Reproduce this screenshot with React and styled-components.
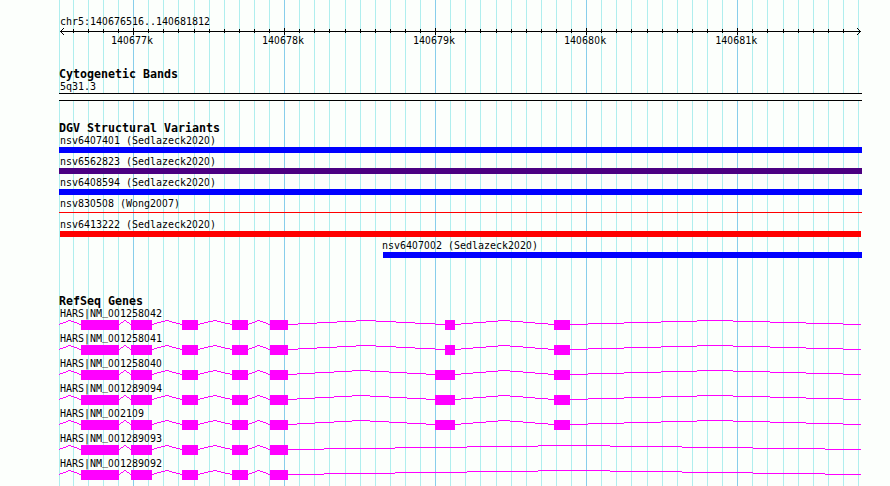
import React from "react";
import styled, { createGlobalStyle } from "styled-components";

const LEFT = 59;
const WIDTH = 803;

const minorLines = [
  59, 73, 88, 103, 118, 148, 163, 178, 194, 209, 224, 239, 254, 269, 299, 314,
  329, 345, 360, 375, 390, 405, 420, 450, 465, 480, 496, 511, 526, 541, 556,
  571, 601, 616, 631, 647, 662, 677, 692, 707, 722, 752, 767, 783, 798, 813,
  828, 843, 858
];
const majorLines = [133, 284, 435, 586, 737];
const tickLabels = ["140677k", "140678k", "140679k", "140680k", "140681k"];

const variants = [
  { name: "nsv6407401 (Sedlazeck2020)", color: "#0000ff" },
  { name: "nsv6562823 (Sedlazeck2020)", color: "#4b0082" },
  { name: "nsv6408594 (Sedlazeck2020)", color: "#0000ff" },
  { name: "nsv830508 (Wong2007)", color: "#ff0000", thin: true },
  { name: "nsv6413222 (Sedlazeck2020)", color: "#ff0000", from: 60, to: 861 },
  { name: "nsv6407002 (Sedlazeck2020)", color: "#0000ff", from: 383, label: 323 }
];

const commonExons = [
  [81, 119],
  [131, 152],
  [182, 198],
  [232, 248],
  [270, 288]
];
const shortExons = [...commonExons, [445, 455], [554, 570]];
const longExons = [...commonExons, [435, 455], [554, 570]];

const genes = [
  { name: "HARS|NM_001258042", exons: shortExons },
  { name: "HARS|NM_001258041", exons: shortExons },
  { name: "HARS|NM_001258040", exons: longExons },
  { name: "HARS|NM_001289094", exons: longExons },
  { name: "HARS|NM_002109", exons: longExons },
  { name: "HARS|NM_001289093", exons: commonExons },
  { name: "HARS|NM_001289092", exons: commonExons }
];

const GlobalStyle = createGlobalStyle`
  body {
    margin: 0;
    background: #fcfffc;
  }
`;

const Browser = styled.div`
  position: relative;
  width: 890px;
  height: 486px;
  overflow: hidden;
  background: #fcfffc;
  color: #000;
  font-family: "DejaVu Sans Mono", "Liberation Mono", monospace;
`;

const Grid = styled.svg`
  position: absolute;
  top: 0;
  left: 0;
  display: block;
`;

const Tracks = styled.div`
  position: relative;
  display: flex;
  flex-direction: column;
  width: ${WIDTH}px;
  padding: 16px 0 0 ${LEFT}px;
`;

const Track = styled.section`
  display: flex;
  flex-direction: column;
  gap: ${props => props.$gap || 0}px;
  margin-bottom: ${props => props.$space || 0}px;
`;

const Title = styled.h2`
  height: 14px;
  margin: 0 0 ${props => -(props.$gap || 0)}px;
  font-size: 11.63px;
  font-weight: bold;
  line-height: 14px;
  white-space: pre;
`;

const Label = styled.div`
  height: 12px;
  padding-left: ${props => props.$indent || 1}px;
  font-size: 10px;
  letter-spacing: -0.02px;
  line-height: 12px;
  white-space: pre;
`;

// the mono face dots its zeros, so they come from the condensed sans
const Zero = styled.span`
  font-family: "DejaVu Sans Condensed", "DejaVu Sans", sans-serif;
  font-stretch: condensed;
  letter-spacing: 0.27px;
  line-height: 1;
`;

// lifted onto the baseline, clear of the exons below
const Underscore = styled.span`
  line-height: 0;
  vertical-align: 2px;
`;

const Ticks = styled.div`
  display: flex;
  gap: 108px;
  padding-left: 51px;
`;

const Drawing = styled.svg`
  display: block;
  shape-rendering: crispEdges;
`;

const Band = styled.div`
  height: 6px;
  border-top: 1px solid #000;
  border-bottom: 1px solid #000;
  background: #fcfffc;
`;

const Bar = styled.div`
  height: ${props => (props.$thin ? 1 : 6)}px;
  margin: ${props => (props.$thin ? "2px 0 3px" : "0")};
  margin-left: ${props => props.$from - LEFT}px;
  width: ${props => props.$to - props.$from}px;
  background: ${props => props.$color};
`;

const Text = ({ children, indent }) => (
  <Label $indent={indent}>
    {children.split(/(0+|_)/).map((part, i) => {
      if (part[0] === "0") return <Zero key={i}>{part}</Zero>;
      if (part === "_") return <Underscore key={i}>{part}</Underscore>;
      return part;
    })}
  </Label>
);

// intron hat, climbs four pixels to the middle and back down
const hat = (from, to) => {
  const part = (to - from) / 16;
  const edges = [from];
  for (let i = 1; i < 16; i += 2) {
    edges.push(Math.round(from + part * i - 0.2));
  }
  edges.push(to);
  return [4, 3, 2, 1, 0, 1, 2, 3, 4]
    .map((y, i) => `M${edges[i]} ${y}H${edges[i + 1]}v1H${edges[i]}z`)
    .join("");
};

const introns = exons => {
  const starts = [LEFT, ...exons.map(e => e[1])];
  const ends = [...exons.map(e => e[0]), 861];
  return starts.map((start, i) => hat(start, ends[i])).join("");
};

const Ruler = () => (
  <Drawing width={WIDTH} height="7" viewBox={`${LEFT} 0 ${WIDTH} 7`}>
    <rect x="60" y="3" width="801" height="1" />
    {minorLines.slice(1, -1).map(x => (
      <rect key={x} x={x} y="1" width="1" height="4" />
    ))}
    {majorLines.map(x => (
      <rect key={x} x={x} y="0" width="1" height="7" />
    ))}
    <path d="M63 0h1v1h-1zM62 1h1v1h-1zM61 2h1v1h-1zM61 4h1v1h-1zM62 5h1v1h-1zM63 6h1v1h-1z" />
    <path d="M857 0h1v1h-1zM858 1h1v1h-1zM859 2h1v1h-1zM859 4h1v1h-1zM858 5h1v1h-1zM857 6h1v1h-1z" />
  </Drawing>
);

const Gene = ({ name, exons }) => (
  <div>
    <Text>{name}</Text>
    <Drawing
      width={WIDTH}
      height="10"
      viewBox={`${LEFT} 0 ${WIDTH} 10`}
      fill="#ff00ff"
    >
      <path d={introns(exons)} />
      {exons.map(([from, to]) => (
        <rect key={from} x={from} y="0" width={to - from} height="10" />
      ))}
    </Drawing>
  </div>
);

const App = () => (
  <Browser>
    <GlobalStyle />
    <Grid width="890" height="486">
      {minorLines.map(x => (
        <rect key={x} x={x} width="1" height="486" fill="#afeeee" />
      ))}
      {majorLines.map(x => (
        <rect key={x} x={x} width="1" height="486" fill="#87ceeb" />
      ))}
    </Grid>

    <Tracks>
      <Track $space={20}>
        <Text>chr5:140676516..140681812</Text>
        <Ruler />
        <Ticks>
          {tickLabels.map(label => (
            <Text key={label}>{label}</Text>
          ))}
        </Ticks>
      </Track>

      <Track $space={20}>
        <Title>Cytogenetic Bands</Title>
        <Text>5q31.3</Text>
        <Band />
      </Track>

      <Track $gap={3} $space={36}>
        <Title $gap={3}>DGV Structural Variants</Title>
        {variants.map(({ name, color, thin, from = LEFT, to = 862, label }) => (
          <div key={name}>
            <Text indent={label}>{name}</Text>
            <Bar $color={color} $thin={thin} $from={from} $to={to} />
          </div>
        ))}
      </Track>

      <Track $gap={3}>
        <Title $gap={3}>RefSeq Genes</Title>
        {genes.map(gene => (
          <Gene key={gene.name} {...gene} />
        ))}
      </Track>
    </Tracks>
  </Browser>
);

export default App;
